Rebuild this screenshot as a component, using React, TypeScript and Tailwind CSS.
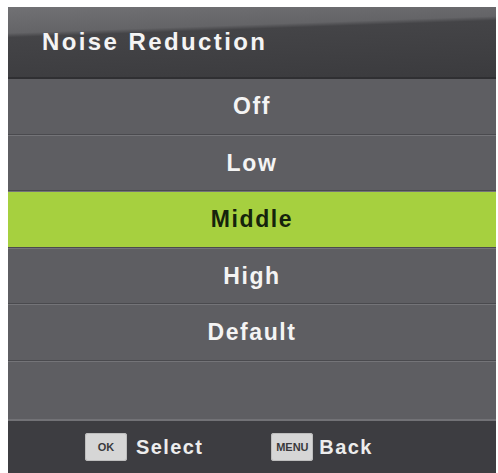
import React from 'react';

const OPTIONS = ['Off', 'Low', 'Middle', 'High', 'Default', ''];
const SELECTED = 'Middle';

const Key = ({ label }: { label: string }) => (
  <span className="inline-flex h-[28px] w-[42px] items-center justify-center rounded-[3px] bg-[#d6d6d6] text-[11px] font-bold tracking-[0px] text-[#3a3a3c] shadow-[inset_0_0_0_1px_#bdbdbd]">
    {label}
  </span>
);

const App = () => {
  return (
    <div className="h-[473px] w-[498px] overflow-hidden bg-white pl-[8px] pr-[2px] pt-[7px] font-['Liberation_Sans',Arial,sans-serif]">
      <div className="flex h-[466px] flex-col bg-[#5e5e62]">
        {/* header with gloss */}
        <div className="flex h-[70px] shrink-0 items-center bg-[linear-gradient(178deg,#717174_0%,#646467_30%,#444447_35%,#3b3b3e_100%)] pl-[34px]">
          <h1 className="text-[24px] font-bold tracking-[2.4px] text-[#f4f4f4]">Noise Reduction</h1>
        </div>
        <div className="h-[2px] shrink-0 bg-[#2f2f32]" />

        {OPTIONS.map((opt, i) => {
          const active = opt === SELECTED;
          return (
            <div key={i} className="flex h-[56.6px] shrink-0 flex-col">
              <div
                className={
                  active
                    ? 'flex flex-1 items-center justify-center bg-[#a6d03f] text-[#15230c]'
                    : 'flex flex-1 items-center justify-center bg-[#5e5e62] text-[#f4f4f4]'
                }
              >
                <span className="text-[23px] font-bold tracking-[1.6px]">{opt}</span>
              </div>
              {i < OPTIONS.length - 1 && (
                <>
                  <div className="h-[1px] bg-[#4a4a4e]" />
                  <div className="h-[1px] bg-[#747478]" />
                </>
              )}
            </div>
          );
        })}

        <div className="h-[2px] shrink-0 bg-[#727276]" />
        <div className="flex flex-1 items-center bg-[#3d3d41] pl-[77px]">
          <Key label="OK" />
          <span className="ml-[9px] text-[20px] font-bold tracking-[1.4px] text-[#ededed]">Select</span>
          <span className="ml-[68px]">
            <Key label="MENU" />
          </span>
          <span className="ml-[6px] text-[20px] font-bold tracking-[1.4px] text-[#ededed]">Back</span>
        </div>
      </div>
    </div>
  );
};

export default App;
